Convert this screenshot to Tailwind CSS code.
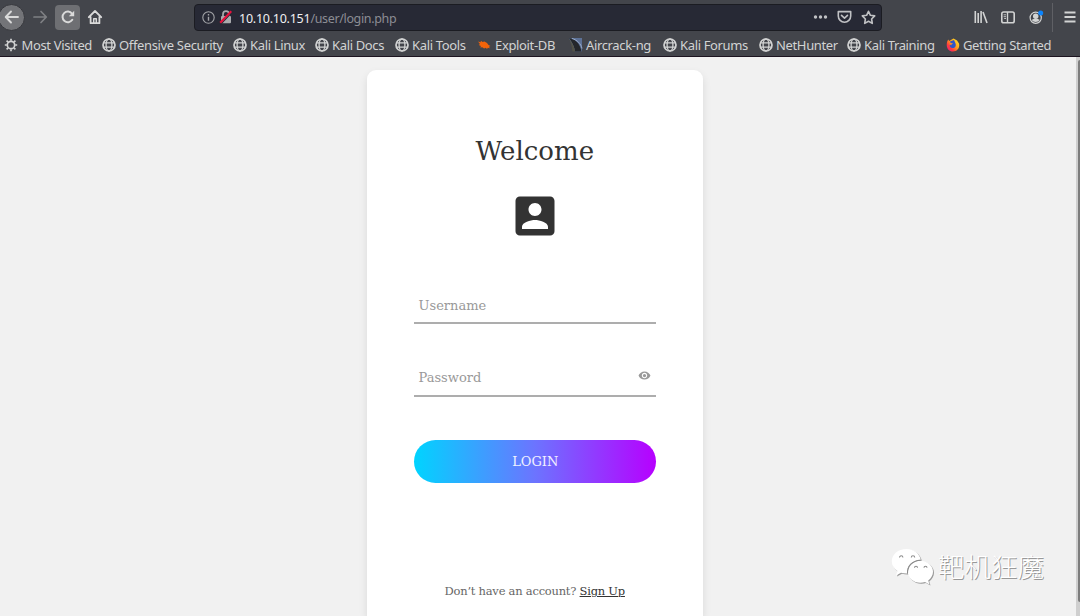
<!DOCTYPE html>
<html lang="en">
<head>
<meta charset="utf-8">
<title>Login</title>
<script src="https://cdn.jsdelivr.net/npm/@tailwindcss/browser@4"></script>
</head>
<body class="w-[1080px] h-[616px] overflow-hidden bg-[#f1f1f1] flex flex-col">
<svg class="hidden">
  <symbol id="globe" viewBox="0 0 14 14"><g fill="none" stroke="#d2d3d3" stroke-width="1.3"><circle cx="7" cy="7" r="6" stroke-width="1.7"/><ellipse cx="7" cy="7" rx="2.9" ry="6"/><path d="M1.5 4.8h11M1.5 9.2h11"/></g></symbol>
</svg>
<header class="h-[57px] shrink-0 bg-[#43454b] border-b border-[#1c1420] font-['Noto_Sans',sans-serif] text-[#d2d3d3]">
  <div class="h-[34px] flex items-center">
    <div class="w-[194px] h-full flex items-center">
      <div class="size-[27px] -ml-[2px] rounded-full bg-[#737478] border border-[#37383d] flex items-center justify-center">
        <svg class="size-[16px]" viewBox="0 0 16 16" fill="none" stroke="#dadada" stroke-width="1.9" stroke-linecap="round" stroke-linejoin="round"><path d="M14 8H2M7 2.5 1.7 8 7 13.500"/></svg>
      </div>
      <svg class="size-[16px] ml-[7px]" viewBox="0 0 16 16" fill="none" stroke="#7f8084" stroke-width="1.7" stroke-linecap="round" stroke-linejoin="round"><path d="M2 8h12M9 2.500 14.300 8 9 13.500"/></svg>
      <div class="size-[25px] ml-[7px] rounded-[4px] bg-[#6e6f73] flex items-center justify-center">
        <svg class="size-[16px]" viewBox="0 0 16 16" fill="none" stroke="#dadada" stroke-width="2" stroke-linecap="round"><path d="M12.300 10.800A5.300 5.300 0 1 1 12 4.600"/><path d="M14.200 1.800v5.400H8.800z" fill="#dadada" stroke="none"/></svg>
      </div>
      <svg class="size-[16px] ml-[7px]" viewBox="0 0 16 16" fill="none" stroke="#dadada" stroke-width="1.8" stroke-linejoin="round" stroke-linecap="round"><path d="M1.800 8.200 8 2l6.200 6.200M3.600 8v6.200h8.800V8"/><path d="M6.700 14V9.800h2.600V14" stroke-width="1.500"/></svg>
    </div>
    <div class="w-[688px] h-[27px] rounded-[4px] bg-[#272935] border border-[#1b1c22] flex items-center pl-[7px] pr-[5px]">
      <svg class="size-[13px]" viewBox="0 0 13 13"><circle cx="6.500" cy="6.500" r="5.700" fill="none" stroke="#a3a4a8" stroke-width="1.100"/><path d="M6.500 5.700v4M6.500 3.100v1.400" stroke="#a3a4a8" stroke-width="1.400"/></svg>
      <svg class="w-[14px] h-[14px] ml-[4px]" viewBox="0 0 14 14"><path d="M4 6V4.200a3 3 0 0 1 6 0V6" fill="none" stroke="#a9aaad" stroke-width="1.700"/><rect x="2" y="6" width="10" height="7.300" rx="1" fill="#a9aaad"/><path d="M2.300 13.500 13 2.300" stroke="#272935" stroke-width="1.200"/><path d="M1.200 12.800 12.300 1.200" stroke="#e8103c" stroke-width="2"/></svg>
      <div class="ml-[6px] mt-[3px] text-[12.5px] leading-[18px] tracking-[-0.35px] text-[#8c8d94] whitespace-nowrap"><span class="text-[#f0f0f2] tracking-[-0.25px]">10.10.10.151</span>/user/login.php</div>
      <svg class="w-[15px] h-[14px] ml-auto" viewBox="0 0 15 14" fill="#c0c1c4"><circle cx="2.500" cy="7" r="1.700"/><circle cx="7.500" cy="7" r="1.700"/><circle cx="12.500" cy="7" r="1.700"/></svg>
      <svg class="w-[15px] h-[14px] ml-[9px]" viewBox="0 0 15 14" fill="none" stroke="#c0c1c4" stroke-width="1.600" stroke-linecap="round" stroke-linejoin="round"><path d="M1.300 1.600h12.400v4.400a6.200 6.200 0 0 1-12.400 0z"/><path d="m4.500 5.300 3 2.900 3-2.900"/></svg>
      <svg class="size-[15px] ml-[9px]" viewBox="0 0 15 15" fill="none" stroke="#c0c1c4" stroke-width="1.600" stroke-linejoin="round"><path d="m7.500 1.300 1.900 4 4.300.6-3.100 3.100.7 4.400-3.800-2.100-3.800 2.100.7-4.400L1.300 5.900l4.300-.6z"/></svg>
    </div>
    <div class="flex-1 h-full flex items-center">
      <svg class="w-[14px] h-[14px] ml-[92px]" viewBox="0 0 14 14" stroke="#d2d3d3" stroke-width="1.600"><path d="M1.300 1v12M4.200 3v10M7.100 1v12M9 2l4 11"/></svg>
      <svg class="w-[14px] h-[13px] ml-[13px]" viewBox="0 0 14 13" fill="none" stroke="#d2d3d3"><rect x=".8" y="1" width="12.400" height="10.800" rx="1.800" stroke-width="1.600"/><path d="M6.500 1v11" stroke-width="1.400"/><path d="M2.600 3.800h2.400M2.600 5.700h2.400M3.200 7.500h1.800" stroke-width=".9"/></svg>
      <svg class="w-[15px] h-[15px] ml-[14px]" viewBox="0 0 15 15"><circle cx="6.700" cy="7.800" r="5.600" fill="none" stroke="#d2d3d3" stroke-width="1.200"/><circle cx="6.700" cy="6.200" r="2.700" fill="#d2d3d3"/><path d="M2.700 9.800c2-1.500 6-1.500 8 0-1.600 3-6.400 3-8 0z" fill="#d2d3d3"/><circle cx="11.700" cy="3" r="2.500" fill="#0a84ff"/></svg>
      <div class="w-px h-[29px] ml-[8px] bg-[#5f6065]"></div>
      <svg class="w-[12px] h-[12px] ml-[11px]" viewBox="0 0 12 12" stroke="#d2d3d3" stroke-width="1.800"><path d="M.5 1.500h11M.5 6h11M.5 10.500h11"/></svg>
    </div>
  </div>
  <nav class="h-[21px] pl-[4px] flex items-center text-[13px] tracking-[-0.35px] leading-[20px] whitespace-nowrap">
    <div class="w-[98px] flex items-center gap-[3.500px]"><svg class="size-[14px]" viewBox="0 0 14 14" stroke="#d2d3d3" fill="none"><circle cx="7" cy="7" r="3.700" stroke-width="1.700"/><path d="M7 .8v2M7 11.200v2M.8 7h2M11.200 7h2M2.600 2.600 4 4M10 10l1.400 1.400M2.600 11.400 4 10M10 4l1.400-1.400" stroke-width="1.700"/></svg><span>Most Visited</span></div>
    <div class="w-[131px] flex items-center gap-[3px]"><svg class="size-[14px]"><use href="#globe"/></svg><span>Offensive Security</span></div>
    <div class="w-[82px] flex items-center gap-[3px]"><svg class="size-[14px]"><use href="#globe"/></svg><span>Kali Linux</span></div>
    <div class="w-[80px] flex items-center gap-[3px]"><svg class="size-[14px]"><use href="#globe"/></svg><span>Kali Docs</span></div>
    <div class="w-[83px] flex items-center gap-[3px]"><svg class="size-[14px]"><use href="#globe"/></svg><span>Kali Tools</span></div>
    <div class="w-[91px] flex items-center gap-[3px]"><svg class="size-[14px]" viewBox="0 0 14 14"><path d="m0 3.500 2.500.8.500-1.500 1.500 1.200 2-.5 2.500 1.400 1.500 2 2 1-1.400.5.600 1.900-2-.6-.6 1.200-1.500-1.200-1.500.7-1.800-1.200-2 .4.600-1.500L.7 6.900l1.300-.9z" fill="#f2640a"/></svg><span>Exploit-DB</span></div>
    <div class="w-[94px] flex items-center gap-[3px]"><svg class="size-[14px]" viewBox="0 0 14 14"><path d="M0 0h13v13.500H6z" fill="#5d7196"/><path d="M0 0c6 1 11 5 12.500 13.500H6C5.500 9 3 4 0 0z" fill="#24272b"/><path d="M3 .5c5 1.500 9 5 10 10" fill="none" stroke="#9aabc9"/><path d="M0 .5C2 5 3 9 3.500 13.500H6C5.500 9 3 4 0 .5z" fill="#535347"/></svg><span>Aircrack-ng</span></div>
    <div class="w-[96px] flex items-center gap-[3px]"><svg class="size-[14px]"><use href="#globe"/></svg><span>Kali Forums</span></div>
    <div class="w-[88px] flex items-center gap-[3px]"><svg class="size-[14px]"><use href="#globe"/></svg><span>NetHunter</span></div>
    <div class="w-[99px] flex items-center gap-[3px]"><svg class="size-[14px]"><use href="#globe"/></svg><span>Kali Training</span></div>
    <div class="flex items-center gap-[3px]"><svg class="size-[14px]" viewBox="0 0 14 14"><defs><linearGradient id="fx" x1="1" y1="0" x2="0" y2="1"><stop offset=".1" stop-color="#ffe226"/><stop offset=".45" stop-color="#ff9a1e"/><stop offset=".7" stop-color="#ff3b3f"/><stop offset="1" stop-color="#f0148c"/></linearGradient></defs><path d="M1.200 3.500 2.200 1.500l1 1.500L7.500.6 11 2.500 13 5.500c1 4-1.500 8-6 8s-7.500-4-5.800-10z" fill="url(#fx)"/><path d="M4 3.500 8 2l1.500 3.500c1 3-1 5-3 4.500-2 0-3-1.500-2.800-3l1.800.2z" fill="#2f55c8"/><path d="m3.500 5 3.500.3-1.500 1.400z" fill="#ff9a1e"/></svg><span>Getting Started</span></div>
  </nav>
</header>
<main class="relative flex-1 min-h-0 flex font-['DejaVu_Serif',serif]">
  <div class="flex-1 min-h-0 pl-[366.5px] pt-[13px] overflow-hidden">
    <form class="w-[336.5px] h-[546px] rounded-t-[9px] bg-white shadow-[0_4px_9px_rgba(0,0,0,0.1)] px-[47.5px] flex flex-col items-center">
      <h1 class="mt-[61px] text-[26px] leading-[40px] text-[#333333]">Welcome</h1>
      <svg class="mt-[19px] size-[52px]" viewBox="0 0 24 24"><path fill="#333" d="M3 5v14c0 1.100.89 2 2 2h14c1.100 0 2-.9 2-2V5c0-1.100-.9-2-2-2H5c-1.110 0-2 .9-2 2zm12 4c0 1.660-1.340 3-3 3s-3-1.340-3-3 1.340-3 3-3 3 1.340 3 3zm-9 8c0-2 4-3.100 6-3.100s6 1.100 6 3.100v1H6v-1z" /></svg>
      <div class="mt-[44px] w-full h-[38px] border-b-2 border-[#adadad] pl-[4.5px] text-[13px] leading-[40px] text-[#999999]">Username</div>
      <div class="mt-[35px] w-full h-[38px] border-b-2 border-[#adadad] pl-[4.5px] pr-[4.5px] flex justify-between text-[13px] leading-[38px] text-[#999999]"><span>Password</span><svg class="mt-[10px] size-[13px]" viewBox="0 0 24 24"><path fill="#999" d="M12 4.500C7 4.500 2.730 7.610 1 12c1.730 4.390 6 7.500 11 7.500s9.270-3.110 11-7.500c-1.730-4.390-6-7.500-11-7.500zM12 17c-2.760 0-5-2.240-5-5s2.240-5 5-5 5 2.240 5 5-2.240 5-5 5zm0-8c-1.660 0-3 1.340-3 3s1.340 3 3 3 3-1.340 3-3-1.340-3-3-3z"/></svg></div>
      <button type="button" class="mt-[43px] w-full h-[43px] shrink-0 rounded-full bg-linear-to-r/srgb from-[#00d4ff] via-[#6c74ff] to-[#b700ff] text-white/90 text-[13px] leading-[43px] pl-px">LOGIN</button>
      <p class="mt-[98px] text-[11.5px] tracking-[-0.24px] leading-[20px] text-[#666666] whitespace-nowrap">Don’t have an account? <a class="text-[#333333] underline">Sign Up</a></p>
    </form>
  </div>
  <div class="w-[4px] bg-[#cfcfcf] pt-[3px] pl-[2px]"><div class="h-[542px] rounded-l-[2px] bg-[#7d7d7d]"></div></div>
  <div class="absolute left-[891px] top-[491px] flex items-center gap-[4px] font-['Noto_Sans_CJK_SC',sans-serif]">
    <svg class="w-[43px] h-[38px] [filter:drop-shadow(1px_1px_0.5px_#999)]" viewBox="0 0 43 38"><path fill="#fff" d="M15.500 1C7 1 .8 6.500.8 13.300c0 4 2.200 7.500 5.600 9.700L5 27.500l5-2.700c1.700.5 3.600.8 5.500.8l1 0C15 18 21 12 29.800 11.800 28.500 5.500 22.600 1 15.500 1z"/><path fill="#fff" d="M29.300 12.800c-7.200 0-12.500 5-12.500 11s5.500 11 12.500 11c1.700 0 3.200-.3 4.700-.8l4.500 2.400-1.300-4c2.900-2 4.800-5.100 4.800-8.600 0-6-5.500-11-12.700-11z"/><g fill="none" stroke="#8b8b8b" stroke-width="1.100"><path d="M8.500 9.500a1.700 1.700 0 0 1 3.400 0M20.300 9.500a1.700 1.700 0 0 1 3.400 0M23.500 19.700a1.500 1.500 0 0 1 3 0M33 19.700a1.500 1.500 0 0 1 3 0M16.500 25.500C16.300 18 21.500 12.500 29.800 12.200"/></g></svg>
    <span class="text-[26.500px] leading-[38px] -mt-[2px] font-light text-white whitespace-nowrap [text-shadow:1px_1px_0.5px_#999]">靶机狂魔</span>
  </div>
</main>
</body>
</html>
